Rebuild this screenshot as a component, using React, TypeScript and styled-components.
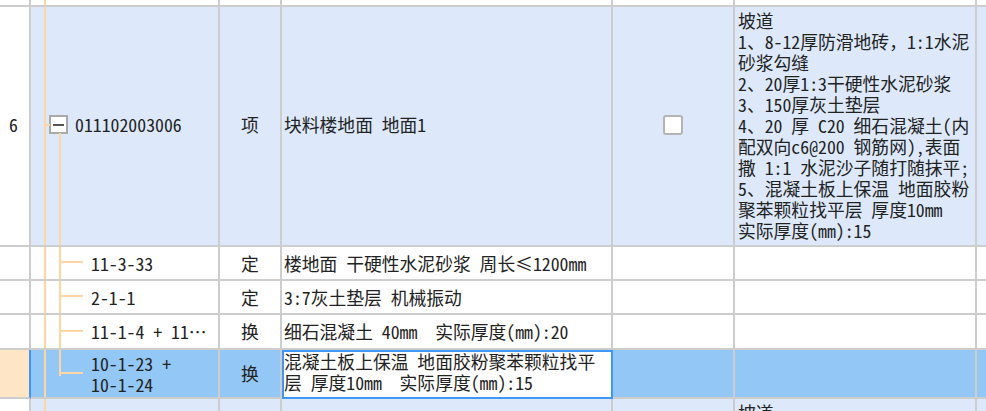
import React from 'react';
import styled, { createGlobalStyle, css } from 'styled-components';

const GRID = '#cdcdcd';
const TREE = '#fdd6a3';
const ROW_BLUE = '#dde9fb';
const SEL_BLUE = '#93c7f5';
const SEL_EDGE = '#3f96f6';

const GlobalStyle = createGlobalStyle`
    html, body {
        margin: 0;
        padding: 0;
        background: #ffffff;
    }
    body {
        font-family: "Noto Sans CJK SC", "Noto Sans", sans-serif;
        font-size: 17.8px;
        font-feature-settings: "hwid" 1;
        color: #222222;
        overflow: hidden;
    }
`;

const Sheet = styled.div`
    width: 986px;
    height: 411px;
    overflow: hidden;
    display: flex;
    flex-direction: column;
`;

const Row = styled.div<{ $height: number; $bg: string }>`
    display: flex;
    flex: none;
    height: ${p => p.$height}px;
    background: ${p => p.$bg};
`;

const cellBase = css`
    box-sizing: border-box;
    height: 100%;
    border-right: 2px solid ${GRID};
    border-bottom: 2px solid ${GRID};
    flex: none;
    line-height: 21px;
    white-space: pre;
    overflow: hidden;
`;

const IndexCell = styled.div<{ $bg?: string; $edge?: string }>`
    ${cellBase};
    width: 31px;
    display: flex;
    align-items: center;
    justify-content: center;
    background: ${p => p.$bg ?? '#ffffff'};
    border-right-color: ${p => p.$edge ?? GRID};
    padding: 0 2px 3px 0;
`;

const CodeCell = styled.div<{ $indent: number }>`
    ${cellBase};
    width: 189px;
    position: relative;
    display: flex;
    align-items: center;
    padding-left: ${p => p.$indent}px;
`;

const UnitCell = styled.div`
    ${cellBase};
    width: 62px;
    display: flex;
    align-items: center;
    justify-content: center;
`;

const NameCell = styled.div<{ $editing?: boolean }>`
    ${cellBase};
    width: 331px;
    display: flex;
    align-items: center;
    padding-left: 2px;
    ${p =>
        p.$editing &&
        css`
            background: #ffffff;
            outline: 2px solid ${SEL_EDGE};
            outline-offset: -2px;
            align-items: flex-start;
            padding-top: 1px;
        `}
`;

const CheckCell = styled.div`
    ${cellBase};
    width: 122px;
    display: flex;
    align-items: center;
    justify-content: center;
`;

const DescCell = styled.div`
    ${cellBase};
    width: 242px;
    padding: 3px 0 0 3px;
`;

const TailCell = styled.div`
    ${cellBase};
    flex: 1;
    border-right: none;
`;

const Lines = styled.div`
    display: flex;
    flex-direction: column;
`;

const Line = styled.span`
    display: block;
    height: 21px;
`;

const FullWidth = styled.span`
    font-feature-settings: normal;
`;

const TreeLine = styled.span<{ $left: number; $top?: string; $bottom?: string; $width?: number; $horizontal?: boolean }>`
    position: absolute;
    background: ${TREE};
    left: ${p => p.$left}px;
    ${p =>
        p.$horizontal
            ? css`
                  top: calc(50% - 2px);
                  height: 2px;
                  width: ${p.$width}px;
              `
            : css`
                  top: ${p.$top ?? '0'};
                  bottom: ${p.$bottom ?? '0'};
                  width: 2px;
              `}
`;

const ToggleBox = styled.span`
    box-sizing: border-box;
    width: 19px;
    height: 19px;
    margin: -3px 7px 0 0;
    border: 2px solid #a9a9a9;
    background: #ffffff;
    display: flex;
    align-items: center;
    justify-content: center;
    flex: none;

    &::after {
        content: '';
        width: 11px;
        height: 2px;
        background: #555555;
    }
`;

const Label = styled.span`
    margin-top: -3px;
`;

const CheckBox = styled.span`
    box-sizing: border-box;
    width: 20px;
    height: 20px;
    border: 2px solid #b4b4b4;
    border-radius: 3px;
    background: #ffffff;
    margin-top: -3px;
`;

const rampLines: React.ReactNode[] = [
    '坡道',
    <>
        1、8-12厚防滑地砖<FullWidth>，</FullWidth>1:1水泥
    </>,
    '砂浆勾缝',
    '2、20厚1:3干硬性水泥砂浆',
    '3、150厚灰土垫层',
    '4、20 厚 C20 细石混凝土(内',
    '配双向c6@200 钢筋网),表面',
    '撒 1:1 水泥沙子随打随抹平;',
    '5、混凝土板上保温 地面胶粉',
    '聚苯颗粒找平层 厚度10mm',
    '实际厚度(mm):15',
];

type Child = {
    code: string[];
    unit: string;
    name: string[];
    height: number;
    selected?: boolean;
};

const children: Child[] = [
    { code: ['11-3-33'], unit: '定', name: ['楼地面 干硬性水泥砂浆 周长≤1200mm'], height: 34 },
    { code: ['2-1-1'], unit: '定', name: ['3:7灰土垫层 机械振动'], height: 34 },
    { code: ['11-1-4 + 11…'], unit: '换', name: ['细石混凝土 40mm  实际厚度(mm):20'], height: 35 },
    {
        code: ['10-1-23 +', '10-1-24'],
        unit: '换',
        name: ['混凝土板上保温 地面胶粉聚苯颗粒找平', '层 厚度10mm  实际厚度(mm):15'],
        height: 49,
        selected: true,
    },
];

export default function App() {
    return (
        <Sheet>
            <GlobalStyle />
            <Row $height={7} $bg="#ffffff">
                <IndexCell />
                <CodeCell $indent={0}>
                    <TreeLine $left={13} />
                </CodeCell>
                <UnitCell />
                <NameCell />
                <CheckCell />
                <DescCell />
                <TailCell />
            </Row>

            <Row $height={240} $bg={ROW_BLUE}>
                <IndexCell>6</IndexCell>
                <CodeCell $indent={18}>
                    <TreeLine $left={13} />
                    <TreeLine $horizontal $left={13} $width={6} />
                    <TreeLine $left={28} $top="calc(50% + 7px)" />
                    <ToggleBox />
                    <Label>011102003006</Label>
                </CodeCell>
                <UnitCell>
                    <Label>项</Label>
                </UnitCell>
                <NameCell>
                    <Label>块料楼地面 地面1</Label>
                </NameCell>
                <CheckCell>
                    <CheckBox />
                </CheckCell>
                <DescCell>
                    <Lines>
                        {rampLines.map((line, i) => (
                            <Line key={i}>{line}</Line>
                        ))}
                    </Lines>
                </DescCell>
                <TailCell />
            </Row>

            {children.map((child, i) => {
                const last = i === children.length - 1;
                return (
                    <Row key={child.code[0]} $height={child.height} $bg={child.selected ? SEL_BLUE : '#ffffff'}>
                        <IndexCell
                            $bg={child.selected ? '#fde5c6' : undefined}
                            $edge={child.selected ? SEL_EDGE : undefined}
                        />
                        <CodeCell $indent={60}>
                            <TreeLine $left={13} />
                            <TreeLine $left={28} $bottom={last ? 'calc(50% - 2px)' : '0'} />
                            <TreeLine $horizontal $left={28} $width={24} />
                            <Lines>
                                {child.code.map(c => (
                                    <Line key={c}>{c}</Line>
                                ))}
                            </Lines>
                        </CodeCell>
                        <UnitCell>{child.unit}</UnitCell>
                        <NameCell $editing={child.selected}>
                            <Lines>
                                {child.name.map(n => (
                                    <Line key={n}>{n}</Line>
                                ))}
                            </Lines>
                        </NameCell>
                        <CheckCell />
                        <DescCell />
                        <TailCell />
                    </Row>
                );
            })}

            <Row $height={30} $bg={ROW_BLUE}>
                <IndexCell />
                <CodeCell $indent={0}>
                    <TreeLine $left={13} />
                </CodeCell>
                <UnitCell />
                <NameCell />
                <CheckCell />
                <DescCell>
                    <Line>坡道</Line>
                </DescCell>
                <TailCell />
            </Row>
        </Sheet>
    );
}
